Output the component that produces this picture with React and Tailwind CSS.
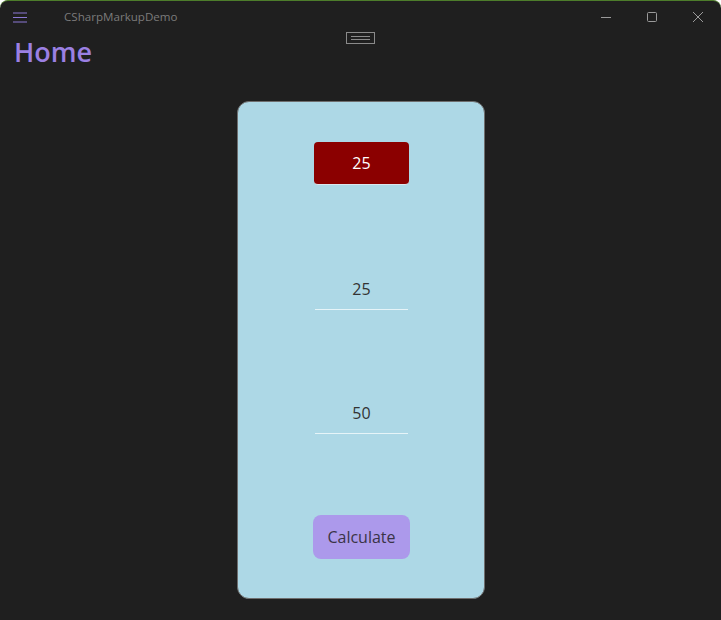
import React from "react";

const font = { fontFamily: '"Open Sans", "Noto Sans", sans-serif' };

function TitleBar() {
    return (
        <div className="flex items-center h-[32px] shrink-0 relative">
            <div className="pl-[13px] flex items-center">
                <svg width="14" height="11" viewBox="0 0 14 11">
                    <path d="M0 1h14M0 5.5h14M0 10h14" stroke="#8c78d6" strokeWidth="1.2" />
                </svg>
            </div>
            <span className="ml-[37px] text-[11.6px] text-[#7b7b7b]">CSharpMarkupDemo</span>
            <div className="ml-auto flex items-center h-full">
                <div className="w-[46px] flex justify-center">
                    <svg width="10" height="10" viewBox="0 0 10 10">
                        <path d="M0 5.5h10" stroke="#9a9a9a" strokeWidth="1" />
                    </svg>
                </div>
                <div className="w-[46px] flex justify-center">
                    <svg width="10" height="10" viewBox="0 0 10 10">
                        <rect x="0.5" y="0.5" width="9" height="9" rx="1" fill="none" stroke="#9a9a9a" strokeWidth="1" />
                    </svg>
                </div>
                <div className="w-[46px] flex justify-center">
                    <svg width="10" height="10" viewBox="0 0 10 10">
                        <path d="M0 0l10 10M10 0L0 10" stroke="#9a9a9a" strokeWidth="1" />
                    </svg>
                </div>
            </div>
        </div>
    );
}

export default function App() {
    return (
        <div style={font} className="w-[721px] h-[620px] bg-[#1f1f1f] border-t border-[#4d7d2b] rounded-t-[8px] flex flex-col overflow-hidden">
            <TitleBar />
            <div className="flex justify-center -mt-[1px]">
                <div className="w-[29px] h-[12px] border border-[#8a8a8a] flex flex-col justify-center gap-[2px] px-[4px]">
                    <div className="h-px bg-[#8a8a8a]" />
                    <div className="h-px bg-[#8a8a8a]" />
                </div>
            </div>
            <h1 className="pl-[14px] -mt-[9px] text-[27px] font-semibold leading-[34px] text-[#9b80e3]">Home</h1>
            <div className="mt-[32px] mx-auto w-[248px] h-[498px] bg-[#add8e6] border border-[#6e6e6e] rounded-[12px] flex flex-col items-center pt-[40px] pl-[2px]">
                <div className="w-[95px] h-[43px] bg-[#8b0000] rounded-[4px] border-b border-[#dbe7ee] flex items-center justify-center text-[16px] text-white">
                    25
                </div>
                <div className="mt-[92px] w-[93px] h-[33px] border-b border-[#e6f4f8] flex items-start justify-center text-[16px] leading-[24px] text-[#333333]">
                    25
                </div>
                <div className="mt-[91px] w-[93px] h-[33px] border-b border-[#e6f4f8] flex items-start justify-center text-[16px] leading-[24px] text-[#333333]">
                    50
                </div>
                <button className="mt-[81px] w-[97px] h-[44px] bg-[#ac99eb] rounded-[8px] text-[16px] text-[#3a3446]">
                    Calculate
                </button>
            </div>
        </div>
    );
}
